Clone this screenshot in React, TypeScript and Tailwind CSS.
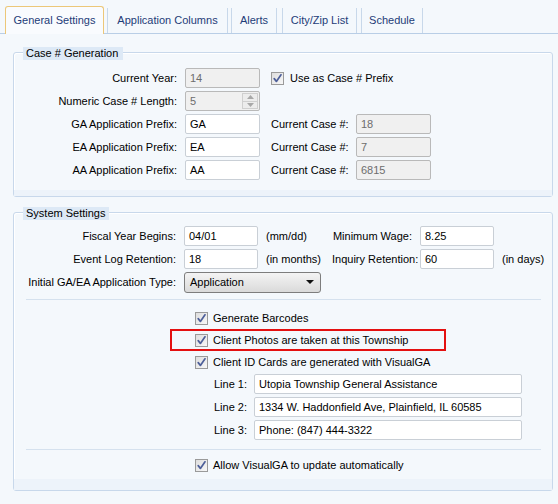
import React from "react";

function Check() {
  return (
    <span className="flex h-[13px] w-[13px] shrink-0 items-center justify-center border border-[#9a9a9a] bg-gradient-to-br from-[#dedede] to-[#f7f7f7]">
      <svg width="11" height="11" viewBox="0 0 11 11">
        <path d="M2.2 5.6 L4.4 8.4 L9 1.8" fill="none" stroke="#4d5f99" strokeWidth="1.7" strokeLinecap="round" strokeLinejoin="round" />
      </svg>
    </span>
  );
}

function Input({ value, w, disabled = false }: { value: string; w: string; disabled?: boolean }) {
  return (
    <div
      className={`flex h-[20px] ${w} shrink-0 items-center rounded-[2px] border px-[4px] ${
        disabled ? "border-[#b9b9b9] bg-[#f0f0f0] text-[#6d6d6d]" : "border-[#c9cfd6] bg-white text-black"
      }`}
    >
      {value}
    </div>
  );
}

function Tab({ label, w, active = false }: { label: string; w: string; active?: boolean }) {
  if (active) {
    return (
      <div className={`relative -mb-px flex h-[28px] ${w} items-center justify-center rounded-t-[3px] border border-b-0 border-[#ecc779] bg-[#f9fbfe] pb-[1px] text-[#1e3c78]`}>
        {label}
      </div>
    );
  }
  return (
    <div className={`flex h-[25px] ${w} items-center justify-center border-x border-[#c8d8ea] text-[#1e3c78]`}>{label}</div>
  );
}

function Group({ title, h, titleW, children }: { title: string; h: string; titleW: string; children: React.ReactNode }) {
  return (
    <div className={`relative ${h} w-[540px] rounded-[3px] border border-[#c8d8eb] shadow-[inset_1px_1px_0_#ffffff]`}>
      <div className={`absolute left-[9px] top-[-6px] h-[13px] ${titleW} bg-[#dde9f6] pl-[3px] leading-[13px]`}>{title}</div>
      <div className="flex h-full flex-col">{children}</div>
    </div>
  );
}

function CheckRow({ label, boxed = false }: { label: string; boxed?: boolean }) {
  return (
    <div
      className={`ml-[156px] flex h-[22px] w-[276px] items-center border-2 pl-[23px] ${
        boxed ? "border-[#e41010]" : "border-transparent"
      }`}
    >
      <Check />
      <span className="ml-[5px]">{label}</span>
    </div>
  );
}

export default function App() {
  return (
    <div className="h-[504px] w-[558px] overflow-hidden bg-[#f4f8fc] font-['Liberation_Sans',Arial,sans-serif] text-[11px] text-black">
      {/* Tabs */}
      <div className="flex h-[34px] items-end border-b border-[#b9cee6] pl-[5px]">
        <Tab label="General Settings" w="w-[99px]" active />
        <div className="ml-[3px]">
          <Tab label="Application Columns" w="w-[121px]" />
        </div>
        <div className="ml-[3px]">
          <Tab label="Alerts" w="w-[46px]" />
        </div>
        <div className="ml-[5px]">
          <Tab label="City/Zip List" w="w-[75px]" />
        </div>
        <div className="ml-[4px]">
          <Tab label="Schedule" w="w-[62px]" />
        </div>
      </div>

      <div className="pl-[13px]">
        {/* Case # Generation */}
        <div className="mt-[18px]">
          <Group title="Case # Generation" h="h-[145px]" titleW="w-[100px]">
            <div className="flex flex-col gap-[3px] pt-[15px]">
              <div className="flex h-[20px] items-center">
                <div className="w-[163px] text-right">Current Year:</div>
                <div className="ml-[8px]">
                  <Input value="14" w="w-[75px]" disabled />
                </div>
                <div className="ml-[11px] flex items-center">
                  <Check />
                  <span className="ml-[6px]">Use as Case # Prefix</span>
                </div>
              </div>
              <div className="flex h-[20px] items-center">
                <div className="w-[163px] text-right">Numeric Case # Length:</div>
                <div className="relative ml-[8px] flex h-[20px] w-[75px] items-center rounded-[2px] border border-[#b9b9b9] bg-[#f0f0f0] pl-[4px] text-[#6d6d6d]">
                  5
                  <div className="absolute right-[1px] top-[1px] flex h-[16px] w-[16px] flex-col border border-[#cfcfcf] bg-[#ececec]">
                    <div className="flex flex-1 items-center justify-center border-b border-[#cfcfcf]">
                      <svg width="7" height="4" viewBox="0 0 7 4"><path d="M0 4 L3.5 0 L7 4Z" fill="#a8a8a8" /></svg>
                    </div>
                    <div className="flex flex-1 items-center justify-center">
                      <svg width="7" height="4" viewBox="0 0 7 4"><path d="M0 0 L3.5 4 L7 0Z" fill="#a8a8a8" /></svg>
                    </div>
                  </div>
                </div>
              </div>
              {[
                ["GA Application Prefix:", "GA", "18"],
                ["EA Application Prefix:", "EA", "7"],
                ["AA Application Prefix:", "AA", "6815"],
              ].map(([l, v, c]) => (
                <div key={l} className="flex h-[20px] items-center">
                  <div className="w-[163px] text-right">{l}</div>
                  <div className="ml-[8px]">
                    <Input value={v} w="w-[75px]" />
                  </div>
                  <div className="ml-[11px] w-[85px]">Current Case #:</div>
                  <Input value={c} w="w-[75px]" disabled />
                </div>
              ))}
            </div>
            <div className="flex-1" />
            <div className="h-[6px] bg-[#edf3fa]" />
          </Group>
        </div>

        {/* System Settings */}
        <div className="mt-[15px]">
          <Group title="System Settings" h="h-[279px]" titleW="w-[86px]">
            <div className="flex flex-col gap-[3px] pt-[13px]">
              <div className="flex h-[20px] items-center">
                <div className="w-[162px] text-right">Fiscal Year Begins:</div>
                <div className="ml-[8px]">
                  <Input value="04/01" w="w-[74px]" />
                </div>
                <div className="ml-[8px] w-[66px]">(mm/dd)</div>
                <div className="w-[80px] text-right">Minimum Wage:</div>
                <div className="ml-[8px]">
                  <Input value="8.25" w="w-[74px]" />
                </div>
              </div>
              <div className="flex h-[20px] items-center">
                <div className="w-[162px] text-right">Event Log Retention:</div>
                <div className="ml-[8px]">
                  <Input value="18" w="w-[74px]" />
                </div>
                <div className="ml-[8px] w-[66px] whitespace-nowrap">(in months)</div>
                <div className="w-[80px] whitespace-nowrap text-right">Inquiry Retention:</div>
                <div className="ml-[8px]">
                  <Input value="60" w="w-[74px]" />
                </div>
                <div className="ml-[8px]">(in days)</div>
              </div>
              <div className="flex h-[20px] items-center">
                <div className="w-[162px] whitespace-nowrap text-right">Initial GA/EA Application Type:</div>
                <div className="ml-[8px] flex h-[21px] w-[137px] items-center justify-between rounded-[3px] border border-[#7d7d7d] bg-gradient-to-b from-[#f4f4f4] to-[#dadada] pl-[5px] pr-[6px]">
                  <span>Application</span>
                  <svg width="8" height="4" viewBox="0 0 8 4"><path d="M0 0 L8 0 L4 4Z" fill="#111" /></svg>
                </div>
              </div>
            </div>
            <div className="ml-[12px] mt-[7px] h-px w-[515px] bg-[#d5e1ee]" />
            <div className="mt-[7px] flex flex-col">
              <CheckRow label="Generate Barcodes" />
              <CheckRow label="Client Photos are taken at this Township" boxed />
              <CheckRow label="Client ID Cards are generated with VisualGA" />
            </div>
            <div className="mt-[1px] flex flex-col gap-[3px]">
              {[
                ["Line 1:", "Utopia Township General Assistance"],
                ["Line 2:", "1334 W. Haddonfield Ave, Plainfield, IL 60585"],
                ["Line 3:", "Phone: (847) 444-3322"],
              ].map(([l, v]) => (
                <div key={l} className="flex h-[20px] items-center">
                  <div className="w-[233px] text-right">{l}</div>
                  <div className="ml-[7px]">
                    <Input value={v} w="w-[268px]" />
                  </div>
                </div>
              ))}
            </div>
            <div className="ml-[12px] mt-[9px] h-px w-[515px] bg-[#d5e1ee]" />
            <div className="mt-[4px]">
              <CheckRow label="Allow VisualGA to update automatically" />
            </div>
            <div className="flex-1" />
            <div className="h-[11px] bg-[#edf3fa]" />
          </Group>
        </div>
      </div>
    </div>
  );
}
